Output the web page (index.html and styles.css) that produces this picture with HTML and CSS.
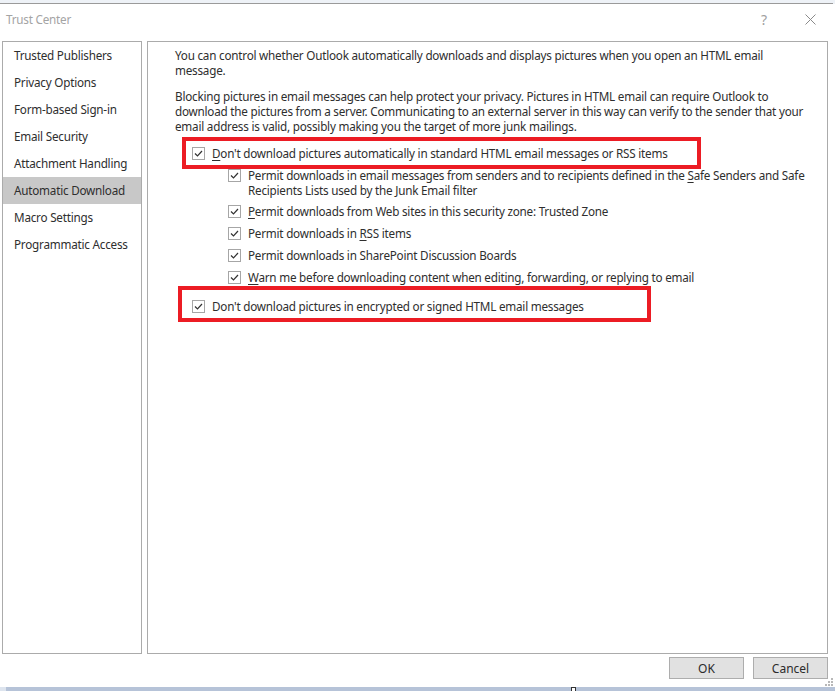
FILE: index.html
```html
<!DOCTYPE html>
<html>
<head>
<meta charset="utf-8">
<link rel="stylesheet" href="styles.css">
</head>
<body>
<div class="window">
  <div class="topedge"><div class="topline"></div></div>
  <div class="titlebar">
    <span class="title">Trust Center</span>
    <span class="help">?</span>
    <span class="close"><svg width="11" height="11" viewBox="0 0 11 11"><path d="M0.5 0.5 L10.5 10.5 M10.5 0.5 L0.5 10.5" stroke="#8a8a8a" stroke-width="1" fill="none"/></svg></span>
  </div>
  <div class="main">
    <nav class="sidebar">
      <div class="nav-item">Trusted Publishers</div>
      <div class="nav-item">Privacy Options</div>
      <div class="nav-item">Form-based Sign-in</div>
      <div class="nav-item">Email Security</div>
      <div class="nav-item">Attachment Handling</div>
      <div class="nav-item selected">Automatic Download</div>
      <div class="nav-item">Macro Settings</div>
      <div class="nav-item">Programmatic Access</div>
    </nav>
    <section class="content">
      <p class="para first">You can control whether Outlook automatically downloads and displays pictures when you open an HTML email<br>message.</p>
      <p class="para">Blocking pictures in email messages can help protect your privacy. Pictures in HTML email can require Outlook to<br>download the pictures from a server. Communicating to an external server in this way can verify to the sender that your<br>email address is valid, possibly making you the target of more junk mailings.</p>
      <div class="highlight hl-one">
        <label class="check"><span class="box"><svg width="9" height="7" viewBox="0 0 9 7"><path d="M1 3.5 L3.5 6 L8 1" stroke="#333" stroke-width="1.2" fill="none"/></svg></span><span><u>D</u>on't download pictures automatically in standard HTML email messages or RSS items</span></label>
      </div>
      <div class="sublist">
        <label class="check two-line"><span class="box"><svg width="9" height="7" viewBox="0 0 9 7"><path d="M1 3.5 L3.5 6 L8 1" stroke="#333" stroke-width="1.2" fill="none"/></svg></span><span>Permit downloads in email messages from senders and to recipients defined in the <u>S</u>afe Senders and Safe<br>Recipients Lists used by the Junk Email filter</span></label>
        <label class="check"><span class="box"><svg width="9" height="7" viewBox="0 0 9 7"><path d="M1 3.5 L3.5 6 L8 1" stroke="#333" stroke-width="1.2" fill="none"/></svg></span><span><u>P</u>ermit downloads from Web sites in this security zone: Trusted Zone</span></label>
        <label class="check"><span class="box"><svg width="9" height="7" viewBox="0 0 9 7"><path d="M1 3.5 L3.5 6 L8 1" stroke="#333" stroke-width="1.2" fill="none"/></svg></span><span>Permit downloads in <u>R</u>SS items</span></label>
        <label class="check"><span class="box"><svg width="9" height="7" viewBox="0 0 9 7"><path d="M1 3.5 L3.5 6 L8 1" stroke="#333" stroke-width="1.2" fill="none"/></svg></span><span>Permit downloads in SharePoint Discussion Boards</span></label>
        <label class="check"><span class="box"><svg width="9" height="7" viewBox="0 0 9 7"><path d="M1 3.5 L3.5 6 L8 1" stroke="#333" stroke-width="1.2" fill="none"/></svg></span><span><u>W</u>arn me before downloading content when editing, forwarding, or replying to email</span></label>
      </div>
      <div class="highlight hl-two">
        <label class="check"><span class="box"><svg width="9" height="7" viewBox="0 0 9 7"><path d="M1 3.5 L3.5 6 L8 1" stroke="#333" stroke-width="1.2" fill="none"/></svg></span><span>Don't download pictures in encrypted or signed HTML email messages</span></label>
      </div>
    </section>
  </div>
  <div class="buttons">
    <button class="btn">OK</button>
    <button class="btn">Cancel</button>
    <svg class="grip" width="8" height="8" viewBox="0 0 8 8"><rect x="6" y="0" width="2" height="2" fill="#b8b8b8"/><rect x="3" y="3" width="2" height="2" fill="#b8b8b8"/><rect x="6" y="3" width="2" height="2" fill="#b8b8b8"/><rect x="0" y="6" width="2" height="2" fill="#b8b8b8"/><rect x="3" y="6" width="2" height="2" fill="#b8b8b8"/><rect x="6" y="6" width="2" height="2" fill="#b8b8b8"/></svg>
  </div>
  <div class="taskbar"><span class="marker"></span></div>
</div>
</body>
</html>
```
FILE: styles.css
```css
html, body {
  margin: 0;
  padding: 0;
  background: #ffffff;
}
.window {
  position: relative;
  width: 835px;
  height: 691px;
  display: flex;
  flex-direction: column;
  font-family: "Noto Sans", "Open Sans", sans-serif;
  font-size: 11.7px;
  letter-spacing: -0.22px;
  color: #2e2e2e;
  overflow: hidden;
}
.topedge {
  height: 4px;
  background: #eef2f7;
  display: flex;
  flex-direction: column;
  justify-content: flex-end;
}
.topline {
  height: 1px;
  width: 833px;
  background: #9a9a9a;
}
.titlebar {
  height: 37px;
  display: flex;
  align-items: center;
  padding-left: 6px;
  padding-bottom: 7px;
  box-sizing: border-box;
}
.title {
  color: #a4a4a4;
  flex: 1;
}
.help {
  color: #a0a0a0;
  font-size: 14px;
  width: 14px;
  margin-right: 30px;
}
.close {
  display: flex;
  margin-right: 19px;
}
.main {
  height: 613px;
  display: flex;
  padding: 0 7px 0 2px;
  gap: 5px;
}
.sidebar {
  width: 140px;
  box-sizing: border-box;
  border: 1px solid #ababab;
  display: flex;
  flex-direction: column;
}
.nav-item {
  height: 27px;
  line-height: 27px;
  padding-left: 11px;
  white-space: nowrap;
}
.nav-item.selected {
  background: #c8c8c8;
}
.content {
  flex: 1;
  box-sizing: border-box;
  border: 1px solid #ababab;
  padding: 6px 0 0 27px;
  display: flex;
  flex-direction: column;
  align-items: flex-start;
}
.para {
  margin: 0 0 11px 0;
  line-height: 15px;
  white-space: nowrap;
}
.highlight {
  border: 4px solid #ec1c24;
  box-sizing: border-box;
  display: flex;
}
.hl-one {
  margin-left: 7px;
  margin-top: -8px;
  width: 519px;
  height: 32px;
  padding: 5px 0 0 6px;
}
.hl-two {
  margin-left: 3px;
  margin-top: 2px;
  width: 473px;
  height: 36px;
  padding: 9px 0 0 10px;
}
.check {
  display: flex;
  align-items: flex-start;
  line-height: 14px;
  white-space: nowrap;
}
.check.two-line {
  line-height: 15px;
  height: 28px;
}
.highlight .check {
  line-height: 15px;
}
.box {
  width: 13px;
  height: 13px;
  box-sizing: border-box;
  border: 1px solid #a6a6a6;
  display: flex;
  align-items: center;
  justify-content: center;
  margin-right: 7px;
  flex: none;
  margin-top: 1px;
}
.sublist {
  margin-left: 53px;
  margin-top: -1px;
  display: flex;
  flex-direction: column;
  gap: 8px;
}
u {
  text-decoration: underline;
  text-underline-offset: 2px;
}
.buttons {
  position: relative;
  height: 33px;
  box-sizing: border-box;
  padding: 3px 7px 0 0;
  display: flex;
  justify-content: flex-end;
  gap: 9px;
}
.btn {
  width: 75px;
  height: 22px;
  box-sizing: border-box;
  border: 1px solid #adadad;
  background: #e1e1e1;
  font-family: "Noto Sans", "Open Sans", sans-serif;
  font-size: 12px;
  color: #2b2b2b;
  padding: 0;
  margin: 0;
}
.grip {
  position: absolute;
  right: 2px;
  bottom: 1px;
}
.taskbar {
  position: relative;
  height: 4px;
  background: linear-gradient(to right, #dde4ee 0, #dde4ee 6px, #b6c3d8 6px);
}
.marker {
  position: absolute;
  left: 571px;
  top: 0;
  width: 3px;
  height: 4px;
  border: 1px solid #333;
  border-bottom: none;
  background: #fff;
}
```
